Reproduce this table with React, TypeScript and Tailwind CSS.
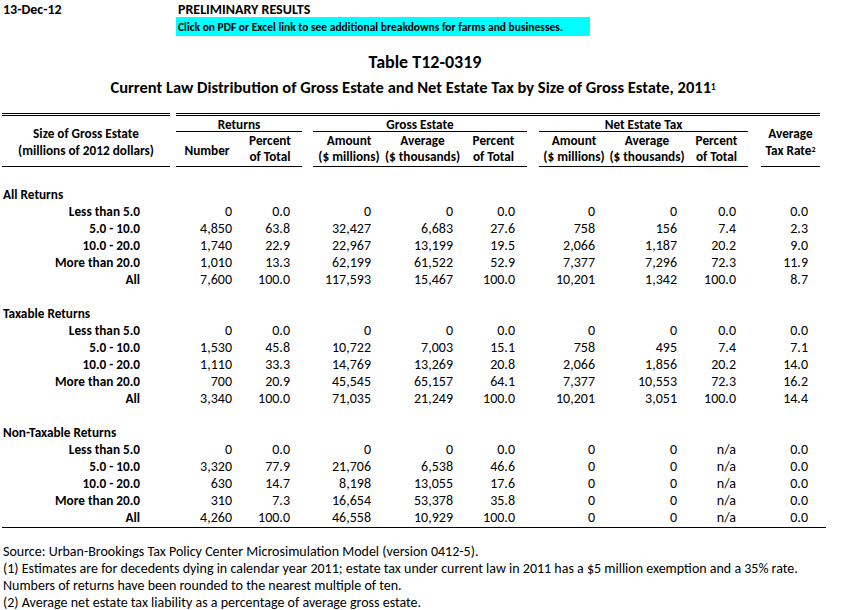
import React from "react";

type Row = { label: string; v: string[] };

const sections: { title: string; rows: Row[] }[] = [
  {
    title: "All Returns",
    rows: [
      { label: "Less than 5.0", v: ["0", "0.0", "0", "0", "0.0", "0", "0", "0.0", "0.0"] },
      { label: "5.0 - 10.0", v: ["4,850", "63.8", "32,427", "6,683", "27.6", "758", "156", "7.4", "2.3"] },
      { label: "10.0 - 20.0", v: ["1,740", "22.9", "22,967", "13,199", "19.5", "2,066", "1,187", "20.2", "9.0"] },
      { label: "More than 20.0", v: ["1,010", "13.3", "62,199", "61,522", "52.9", "7,377", "7,296", "72.3", "11.9"] },
      { label: "All", v: ["7,600", "100.0", "117,593", "15,467", "100.0", "10,201", "1,342", "100.0", "8.7"] },
    ],
  },
  {
    title: "Taxable Returns",
    rows: [
      { label: "Less than 5.0", v: ["0", "0.0", "0", "0", "0.0", "0", "0", "0.0", "0.0"] },
      { label: "5.0 - 10.0", v: ["1,530", "45.8", "10,722", "7,003", "15.1", "758", "495", "7.4", "7.1"] },
      { label: "10.0 - 20.0", v: ["1,110", "33.3", "14,769", "13,269", "20.8", "2,066", "1,856", "20.2", "14.0"] },
      { label: "More than 20.0", v: ["700", "20.9", "45,545", "65,157", "64.1", "7,377", "10,553", "72.3", "16.2"] },
      { label: "All", v: ["3,340", "100.0", "71,035", "21,249", "100.0", "10,201", "3,051", "100.0", "14.4"] },
    ],
  },
  {
    title: "Non-Taxable Returns",
    rows: [
      { label: "Less than 5.0", v: ["0", "0.0", "0", "0", "0.0", "0", "0", "n/a", "0.0"] },
      { label: "5.0 - 10.0", v: ["3,320", "77.9", "21,706", "6,538", "46.6", "0", "0", "n/a", "0.0"] },
      { label: "10.0 - 20.0", v: ["630", "14.7", "8,198", "13,055", "17.6", "0", "0", "n/a", "0.0"] },
      { label: "More than 20.0", v: ["310", "7.3", "16,654", "53,378", "35.8", "0", "0", "n/a", "0.0"] },
      { label: "All", v: ["4,260", "100.0", "46,558", "10,929", "100.0", "0", "0", "n/a", "0.0"] },
    ],
  },
];

// cell widths + right padding, with gaps between column groups
const cells = [
  "w-[62px] pr-[6px]",
  "w-[64px] pr-[12px] mr-[11px]",
  "w-[72px] pr-[14px]",
  "w-[75px] pr-[7px]",
  "w-[67px] pr-[12px] mr-[12px]",
  "w-[70px] pr-[14px]",
  "w-[76px] pr-[8px]",
  "w-[63px] pr-[12px] mr-[13px]",
  "w-[59px] pr-[12px]",
];

function DataRow({ row }: { row: Row }) {
  return (
    <div className="flex h-[17px] items-center whitespace-nowrap">
      <div className="w-[168px] shrink-0 pr-[30px] text-right font-bold text-[13.25px]">{row.label}</div>
      <div className="w-[6px] shrink-0" />
      {row.v.map((val, i) => (
        <div key={i} className={`${cells[i]} shrink-0 text-right`}>
          {val}
        </div>
      ))}
    </div>
  );
}

function SubHead({ w, a, b }: { w: string; a: string; b: string }) {
  return (
    <div className={`${w} shrink-0 flex flex-col items-center justify-center whitespace-nowrap`}>
      <div className="h-[17px] leading-[17px]">{a}</div>
      <div className="h-[16px] leading-[16px]">{b}</div>
    </div>
  );
}

export default function App() {
  return (
    <div
      className="w-[864px] h-[610px] bg-white text-black text-[14px] leading-[17px] overflow-hidden"
      style={{ fontFamily: "Carlito, Calibri, Lato, sans-serif" }}
    >
      {/* top notes */}
      <div className="flex h-[17px] items-center pt-[2px] font-bold whitespace-nowrap">
        <div className="w-[176px] pl-[3px]">13-Dec-12</div>
        <div className="pl-[2px]">PRELIMINARY RESULTS</div>
      </div>
      <div className="flex h-[19px] items-center">
        <div className="ml-[176px] w-[414px] h-[19px] bg-[#00ffff] pl-[2px] pt-[1px] font-bold text-[11.5px] leading-[19px] whitespace-nowrap">
          Click on PDF or Excel link to see additional breakdowns for farms and businesses.
        </div>
      </div>

      {/* title */}
      <div className="h-[14px]" />
      <div className="h-[24px] leading-[24px] text-center font-bold text-[18px] w-[850px]">Table T12-0319</div>
      <div className="h-[26px] leading-[26px] text-center font-bold text-[16.5px] w-[826px] whitespace-nowrap">
        Current Law Distribution of Gross Estate and Net Estate Tax by Size of Gross Estate, 2011
        <sup className="text-[9px] relative -top-[3px]">1</sup>
      </div>
      <div className="h-[13px]" />

      {/* table header */}
      <div className="flex font-bold text-[13.25px] pl-[2px] whitespace-nowrap">
        <div className="w-[168px] shrink-0 border-t-[3px] border-double border-b border-black flex flex-col items-center justify-center h-[54px] pt-[2px]">
          <div>Size of Gross Estate</div>
          <div>(millions of 2012 dollars)</div>
        </div>
        <div className="w-[6px] shrink-0" />
        <div className="w-[644px] shrink-0 border-t-[3px] border-double border-black flex">
          <div className="w-[126px] shrink-0 border-b border-black">
            <div className="h-[16px] leading-[18px] text-center border-b border-black">Returns</div>
            <div className="flex h-[33px]">
              <div className="w-[62px] shrink-0 flex items-center justify-center pt-[3px]">Number</div>
              <SubHead w="w-[64px]" a="Percent" b="of Total" />
            </div>
          </div>
          <div className="w-[11px] shrink-0" />
          <div className="w-[214px] shrink-0 border-b border-black">
            <div className="h-[16px] leading-[18px] text-center border-b border-black">Gross Estate</div>
            <div className="flex h-[33px]">
              <SubHead w="w-[72px]" a="Amount" b="($ millions)" />
              <SubHead w="w-[75px]" a="Average" b="($ thousands)" />
              <SubHead w="w-[67px]" a="Percent" b="of Total" />
            </div>
          </div>
          <div className="w-[12px] shrink-0" />
          <div className="w-[209px] shrink-0 border-b border-black">
            <div className="h-[16px] leading-[18px] text-center border-b border-black">Net Estate Tax</div>
            <div className="flex h-[33px]">
              <SubHead w="w-[70px]" a="Amount" b="($ millions)" />
              <SubHead w="w-[76px]" a="Average" b="($ thousands)" />
              <SubHead w="w-[63px]" a="Percent" b="of Total" />
            </div>
          </div>
          <div className="w-[13px] shrink-0" />
          <div className="w-[59px] shrink-0 border-b border-black flex flex-col items-center justify-center pt-[2px]">
            <div>Average</div>
            <div>
              Tax Rate<sup className="text-[8px] relative -top-[3px]">2</sup>
            </div>
          </div>
        </div>
      </div>

      {/* body */}
      <div className="pl-[2px] pt-[2px]">
        {sections.map((s) => (
          <div key={s.title}>
            <div className="h-[17px]" />
            <div className="h-[17px] leading-[17px] pl-[1px] font-bold text-[13.25px]">{s.title}</div>
            {s.rows.map((r) => (
              <DataRow key={r.label} row={r} />
            ))}
          </div>
        ))}
      </div>

      {/* footer */}
      <div className="ml-[2px] mt-[1px] w-[824px] border-t border-black pt-[15px] pl-[1px] whitespace-nowrap">
        <div className="h-[17px]">Source: Urban-Brookings Tax Policy Center Microsimulation Model (version 0412-5).</div>
        <div className="h-[17px]">
          (1) Estimates are for decedents dying in calendar year 2011; estate tax under current law in 2011 has a $5 million exemption and a 35% rate.
        </div>
        <div className="h-[17px]">Numbers of returns have been rounded to the nearest multiple of ten.</div>
        <div className="h-[17px]">(2) Average net estate tax liability as a percentage of average gross estate.</div>
      </div>
    </div>
  );
}
